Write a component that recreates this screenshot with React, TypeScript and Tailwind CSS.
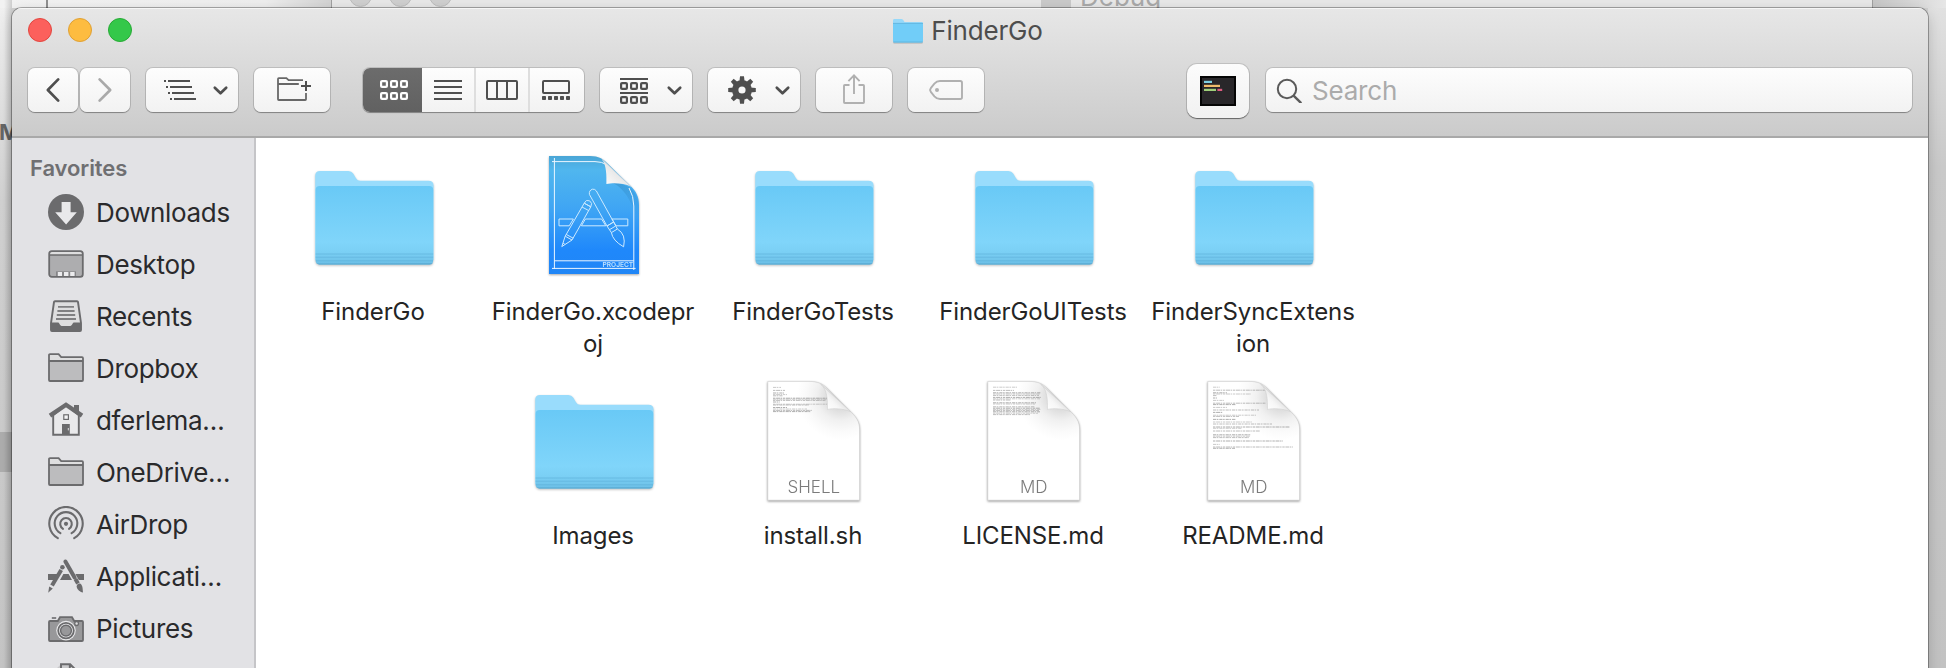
import type { ReactNode } from "react";

const INK = "#4f4f4f";
const FAINT = "#b0b0b0";
const SIDE = "#6b6b6d";

/* ---------- toolbar ---------- */

function ToolButton({ x, w = 92, className = "w-[92px]", children }: { x: number; w?: number; className?: string; children: ReactNode }) {
  return (
    <button
      className={`h-[44px] shrink-0 rounded-[7px] bg-linear-to-b from-[#fdfdfd] to-[#f2f2f2] shadow-[0_0_0_1px_rgba(0,0,0,0.13),0_1px_1px_0_rgba(0,0,0,0.28)] ${className}`}
    >
      <svg viewBox={`${x} 68 ${w} 44`} className="block h-full w-full" fill="none">
        {children}
      </svg>
    </button>
  );
}

function Caret({ x }: { x: number }) {
  return (
    <polyline
      points={`${x + 68.8},87.8 ${x + 74.5},93.3 ${x + 80.2},87.8`}
      stroke={INK}
      strokeWidth="2.7"
      strokeLinecap="round"
      strokeLinejoin="round"
    />
  );
}

function Squares({ x, y, color }: { x: number; y: number; color: string }) {
  return (
    <g stroke={color} strokeWidth="2.2">
      {[0, 10, 20].map((d) => (
        <rect key={d} x={x + d + 1.1} y={y + 1.1} width="5.8" height="5.8" rx="1" />
      ))}
    </g>
  );
}

function Segment({ x, w, className, children }: { x: number; w: number; className: string; children: ReactNode }) {
  return (
    <button className={`h-[44px] shrink-0 ${className}`}>
      <svg viewBox={`${x} 68 ${w} 44`} className="block h-full w-full" fill="none">
        {children}
      </svg>
    </button>
  );
}

function Toolbar() {
  return (
    <div className="flex h-[54px] items-center pr-4 pl-4">
      <div className="flex gap-[2px]">
        <ToolButton x={28} w={50} className="w-[50px]">
          <polyline points="58.2,79.4 47.8,90 58.2,100.6" stroke={INK} strokeWidth="2.7" strokeLinecap="round" strokeLinejoin="round" />
        </ToolButton>
        <ToolButton x={80} w={50} className="w-[50px]">
          <polyline points="99.6,79.4 110.2,90 99.6,100.6" stroke="#a9a9a9" strokeWidth="2.7" strokeLinecap="round" strokeLinejoin="round" />
        </ToolButton>
      </div>
      <div className="ml-4 flex gap-4">
        <ToolButton x={146}>
          <g fill={INK}>
            {[0, 1, 2, 3].map((i) => (
              <g key={i}>
                <rect x={164 + i * 2} y={80 + i * 6} width="2" height="2" />
                <rect x={168 + i * 2} y={80 + i * 6} width="22" height="2" />
              </g>
            ))}
          </g>
          <Caret x={146} />
        </ToolButton>
        <ToolButton x={254} w={76} className="w-[76px]">
          <path
            d="M306 93V99.2a.8.8 0 0 1-.8.8H278.8a.8.8 0 0 1-.8-.8V79a.8.8 0 0 1 .8-.8H286.4L288.6 80.2H303M278 84H298.8"
            stroke="#686868"
            strokeWidth="1.8"
          />
          <path d="M306 81V91M301 86H311" stroke={INK} strokeWidth="2" />
        </ToolButton>
      </div>
      <div className="ml-[33px] flex overflow-hidden rounded-[7px] bg-linear-to-b from-[#fdfdfd] to-[#f2f2f2] shadow-[0_0_0_1px_rgba(0,0,0,0.13),0_1px_1px_0_rgba(0,0,0,0.28)]">
        <Segment x={363} w={59} className="w-[59px] bg-linear-to-b from-[#6c6c6c] to-[#616161]">
          <Squares x={380} y={80} color="#ffffff" />
          <Squares x={380} y={92} color="#ffffff" />
        </Segment>
        <Segment x={422} w={52} className="w-[54px] border-r-2 border-[#dedede]">
          <path d="M434 81H462M434 87H462M434 93H462M434 99H462" stroke={INK} strokeWidth="2" />
        </Segment>
        <Segment x={476} w={52} className="w-[54px] border-r-2 border-[#dedede]">
          <rect x="487" y="81" width="30" height="18" rx="1" stroke={INK} strokeWidth="2" />
          <path d="M497 81V99M507 81V99" stroke={INK} strokeWidth="2" />
        </Segment>
        <Segment x={530} w={54} className="w-[54px]">
          <rect x="543" y="81" width="26" height="12" rx="1" stroke={INK} strokeWidth="2" />
          {[0, 1, 2, 3, 4].map((i) => (
            <rect key={i} x={542 + i * 6} y="96" width="4" height="4" rx=".8" fill={INK} />
          ))}
        </Segment>
      </div>
      <div className="ml-4 flex gap-4">
        <ToolButton x={600}>
          <path d="M620 79H648M620 93H648" stroke={INK} strokeWidth="2" />
          <Squares x={620} y={82} color={INK} />
          <Squares x={620} y={96} color={INK} />
          <Caret x={600} />
        </ToolButton>
        <ToolButton x={708}>
          <circle cx="742" cy="90" r="6.8" stroke={INK} strokeWidth="6.4" />
          <g fill={INK}>
            {[0, 45, 90, 135, 180, 225, 270, 315].map((a) => (
              <path key={a} d="M739.4 82L740 76.2H744L744.6 82Z" transform={`rotate(${a} 742 90)`} />
            ))}
          </g>
          <Caret x={708} />
        </ToolButton>
        <ToolButton x={816} w={76} className="w-[76px]">
          <path
            d="M849.5 85H844.8a.8.8 0 0 0-.8.8V102.2a.8.8 0 0 0 .8.8H863.2a.8.8 0 0 0 .8-.8V85.8a.8.8 0 0 0-.8-.8H858.5M854 75.4V94M848.4 81.2L854 75.4L859.6 81.2"
            stroke={FAINT}
            strokeWidth="1.9"
          />
        </ToolButton>
        <ToolButton x={908} w={76} className="w-[76px]">
          <path
            d="M940 81H960.2a1.8 1.8 0 0 1 1.8 1.8V97.2a1.8 1.8 0 0 1-1.8 1.8H940C937 99 935.8 98 934.4 96.4L930.8 91.8Q929.4 90 930.8 88.2L934.4 83.6C935.8 82 937 81 940 81Z"
            stroke={FAINT}
            strokeWidth="1.9"
          />
          <circle cx="937" cy="90" r="2" fill={FAINT} />
        </ToolButton>
      </div>
      <button className="mt-[2px] ml-auto h-[54px] w-[62px] shrink-0 rounded-[10px] bg-linear-to-b from-[#fcfcfc] to-[#f1f1f1] shadow-[0_0_0_1px_rgba(0,0,0,0.12),0_1px_1px_0_rgba(0,0,0,0.45)]">
        <svg viewBox="1187 64 62 54" className="block h-full w-full">
          <rect x="1200" y="76" width="36" height="30" fill="#050505" />
          <rect x="1202" y="78" width="32" height="26" fill="#29272a" />
          <rect x="1204" y="80.8" width="8" height="2.2" fill="#7fd0e2" />
          <rect x="1204" y="84.8" width="16" height="2.2" fill="#f0bd6c" />
          <rect x="1204" y="88.8" width="12" height="2.2" fill="#9fd07a" />
          <rect x="1217.4" y="88.8" width="4.8" height="2.2" fill="#dd5c80" />
        </svg>
      </button>
      <div className="ml-[17px] flex h-[44px] w-[646px] shrink-0 items-center rounded-[7px] bg-linear-to-b from-[#fdfdfd] to-[#f2f2f2] shadow-[0_0_0_1px_rgba(0,0,0,0.13),0_1px_1px_0_rgba(0,0,0,0.28)]">
        <svg viewBox="0 0 26 26" className="ml-[10px] block h-[26px] w-[26px]" fill="none" stroke="#5a5a5a" strokeWidth="2">
          <circle cx="11" cy="12" r="9.2" />
          <path d="M17.6 18.6L25.2 26.2" strokeWidth="2.4" />
        </svg>
        <span className="ml-[10px] pt-[2px] text-[26px] leading-[42px] tracking-[-0.2px] text-[#ababab]">Search</span>
      </div>
    </div>
  );
}

/* ---------- sidebar ---------- */

function SmallFolder() {
  return (
    <>
      <path d="M1 11V5.2a1 1 0 0 1 1-1H10.6L13.2 7.2H34a1 1 0 0 1 1 1V11Z" fill="#dededf" />
      <path d="M1 11H35V30a1 1 0 0 1-1 1H2a1 1 0 0 1-1-1Z" fill="#bcbcbe" />
      <path d="M1 5.2a1 1 0 0 1 1-1H10.6L13.2 7.2H34a1 1 0 0 1 1 1V30a1 1 0 0 1-1 1H2a1 1 0 0 1-1-1ZM1 11H35" fill="none" stroke={SIDE} strokeWidth="1.8" />
    </>
  );
}

const places: { name: string; icon: ReactNode }[] = [
  {
    name: "Downloads",
    icon: (
      <>
        <circle cx="18" cy="18" r="18" fill={SIDE} />
        <path d="M13.6 8H22.6V18.3H28.8L18.1 30.4L7.2 18.3H13.6Z" fill="#e9e9eb" />
      </>
    ),
  },
  {
    name: "Desktop",
    icon: (
      <>
        <rect x="1.2" y="5.2" width="33.6" height="25.6" rx="2.6" fill="#adadaf" />
        <path d="M1.2 9V7.8a2.6 2.6 0 0 1 2.6-2.6H32.2a2.6 2.6 0 0 1 2.6 2.6V9Z" fill="#dededf" />
        <rect x="8" y="25.4" width="20" height="5" fill="#858587" />
        <path d="M9.8 26H14V30H9.8ZM16 26H20.4V30H16ZM22.2 26H26.6V30H22.2Z" fill="#ececee" />
        <path d="M1.2 9H34.8" stroke={SIDE} strokeWidth="1.7" />
        <rect x="1.2" y="5.2" width="33.6" height="25.6" rx="2.6" fill="none" stroke={SIDE} strokeWidth="1.8" />
      </>
    ),
  },
  {
    name: "Recents",
    icon: (
      <>
        <path d="M7 3.2H29a1 1 0 0 1 1 .8L33 25V32a1 1 0 0 1-1 1H4a1 1 0 0 1-1-1V25L6 4a1 1 0 0 1 1-.8Z" fill="#dededf" stroke={SIDE} strokeWidth="1.9" />
        <path d="M3 24.4H10.2C11.6 24.4 11.4 28 14.6 28H21.4C24.6 28 24.4 24.4 25.8 24.4H33V32a1 1 0 0 1-1 1H4a1 1 0 0 1-1-1Z" fill={SIDE} />
        <path d="M10 8.8H26M9.4 13H26.6M8.8 17H27.2M8 21H28" stroke="#808082" strokeWidth="1.8" />
      </>
    ),
  },
  { name: "Dropbox", icon: <SmallFolder /> },
  {
    name: "dferlema…",
    icon: (
      <>
        <path d="M26 3H31V12H26Z" fill={SIDE} />
        <path d="M5.2 13V32.8H30.8V13L18 3Z" fill="#e9e9eb" stroke={SIDE} strokeWidth="1.9" />
        <path d="M2 13.6L18 2.8L34 13.6" fill="none" stroke={SIDE} strokeWidth="4.4" />
        <rect x="15.8" y="12.8" width="4.6" height="4.6" fill="#f4f4f6" stroke={SIDE} strokeWidth="1.2" />
        <path d="M14 22H21.8V33H14Z" fill={SIDE} />
        <path d="M20.3 26V28.4" stroke="#e9e9eb" strokeWidth=".9" />
      </>
    ),
  },
  { name: "OneDrive…", icon: <SmallFolder /> },
  {
    name: "AirDrop",
    icon: (
      <g fill="none" stroke={SIDE} strokeWidth="2.1" strokeLinecap="round">
        <circle cx="18" cy="17.8" r="2.1" fill={SIDE} stroke="none" />
        <path d="M15 22.8A5.8 5.8 0 1 1 21 22.8" />
        <path d="M12.4 27.2A11.3 11.3 0 1 1 23.6 27.2" />
        <path d="M9.8 32.2A16.7 16.7 0 1 1 26.2 32.2" />
      </g>
    ),
  },
  {
    name: "Applicati…",
    icon: (
      <>
        <path d="M0 16H9.6L6.2 22H0ZM15.4 16H20.6L24 22H12ZM27.4 16H36V22H30.8Z" fill={SIDE} />
        <path d="M17.4 3.6L26.6 19.6" stroke={SIDE} strokeWidth="4" strokeLinecap="round" />
        <path d="M27.4 21L30 25.4" stroke={SIDE} strokeWidth="4" />
        <path d="M28.6 28.4C29 25.6 32 24.4 33.6 27C35 29.2 34.6 32 35 34.6C32.4 33.8 29.2 32 28.6 28.4Z" fill={SIDE} />
        <circle cx="14.4" cy="9.2" r="2.3" fill={SIDE} />
        <path d="M13.2 12L4 27.6" stroke={SIDE} strokeWidth="4" />
        <path d="M1.2 28.4L4.8 30.4L.2 34.8Z" fill={SIDE} />
      </>
    ),
  },
  {
    name: "Pictures",
    icon: (
      <>
        <path d="M3.8 8H8.2" stroke={SIDE} strokeWidth="1.6" />
        <path
          d="M2 11H9.8L12 7.2H24L26.2 11H34a1 1 0 0 1 1 1V30a1 1 0 0 1-1 1H2a1 1 0 0 1-1-1V12a1 1 0 0 1 1-1Z"
          fill="#98989a"
          stroke={SIDE}
          strokeWidth="1.8"
        />
        <circle cx="18" cy="20.6" r="9.8" fill="#e9e9eb" />
        <circle cx="18" cy="20.6" r="7.8" fill="none" stroke={SIDE} strokeWidth="1.8" />
        <circle cx="18" cy="20.6" r="5.4" fill="#98989a" stroke={SIDE} strokeWidth="1.4" />
        <circle cx="28.6" cy="13.6" r="1.9" fill="#dededf" stroke={SIDE} strokeWidth="1.3" />
      </>
    ),
  },
  {
    name: "",
    icon: (
      <>
        <path d="M13 2.2H22L29.4 9V34H7V8Z" fill="#c9c9cb" />
        <path d="M13 10V2.2H22.2L29.4 9.6M21.8 2.4V9" fill="none" stroke={SIDE} strokeWidth="1.9" />
      </>
    ),
  },
];

function Sidebar() {
  return (
    <aside className="h-full w-[244px] shrink-0 border-r-2 border-[#c5c5c8] bg-[#e2e2e5]">
      <h2 className="h-[48px] pt-[8px] pl-[18px] text-[22px] leading-[44px] font-semibold tracking-[-0.1px] text-[#6f6f72]">Favorites</h2>
      <ul>
        {places.map((p, i) => (
          <li key={i} className="flex h-[52px] items-center pl-[36px]">
            <svg viewBox="0 0 36 36" className="block h-[36px] w-[36px] shrink-0">
              {p.icon}
            </svg>
            <span className="ml-[12px] pt-[2px] text-[26px] leading-[50px] tracking-[-0.35px] whitespace-nowrap text-[#2a2a2c]">{p.name}</span>
          </li>
        ))}
      </ul>
    </aside>
  );
}

/* ---------- file icons ---------- */

function FolderIcon() {
  return (
    <svg viewBox="0 0 128 128" className="block h-[128px] w-[128px] drop-shadow-[0_1px_1px_rgba(0,0,0,0.25)]">
      <defs>
        <linearGradient id="face" x1="0" y1="0" x2="0" y2="1">
          <stop offset="0" stopColor="#69c9f6" />
          <stop offset=".72" stopColor="#80d5fa" />
          <stop offset=".85" stopColor="#7acff4" />
          <stop offset="1" stopColor="#6cbfe6" />
        </linearGradient>
      </defs>
      <path d="M6.2 108V24Q6.2 19 11 19H39.4Q42.6 19 44.2 21.6L47 26.2Q48.4 28.8 51.4 28.8H119.6Q124.6 28.8 124.6 33.6V108Z" fill="#99dcfc" />
      <path d="M6.6 38Q6.6 34 10.6 34H120.2Q124.2 34 124.2 38V108.6Q124.2 112.4 120.4 112.4H10.4Q6.6 112.4 6.6 108.6Z" fill="url(#face)" />
      <path d="M6.6 102H124.2M6.6 105.2H124.2M6.8 108.8H124" stroke="#5fb1da" strokeWidth=".9" opacity=".75" />
      <path d="M7 111.6Q8 112.4 10.4 112.4H120.4Q123 112.4 123.8 111.2Z" fill="#58a9d2" />
    </svg>
  );
}

function ProjectIcon() {
  return (
    <svg viewBox="0 0 128 128" className="block h-[128px] w-[128px] drop-shadow-[0_1px_1px_rgba(0,0,0,0.35)]">
      <defs>
        <linearGradient id="blue" x1="0" y1="0" x2="0" y2="1">
          <stop offset="0" stopColor="#4aa6d6" />
          <stop offset=".12" stopColor="#50b6ee" />
          <stop offset=".45" stopColor="#3fa5f4" />
          <stop offset=".8" stopColor="#1f88fb" />
          <stop offset="1" stopColor="#2086f6" />
        </linearGradient>
        <linearGradient id="curl" x1="0" y1="1" x2="1" y2="0">
          <stop offset="0" stopColor="#ffffff" />
          <stop offset=".5" stopColor="#e8e8e8" />
          <stop offset="1" stopColor="#ffffff" />
        </linearGradient>
        <linearGradient id="shade" x1="0" y1="0" x2=".4" y2="1">
          <stop offset="0" stopColor="#2a7db5" stopOpacity=".4" />
          <stop offset="1" stopColor="#2a7db5" stopOpacity="0" />
        </linearGradient>
      </defs>
      <path d="M20 4H61C70 4 74 7 78 11L101.6 34C107 39 110 45 110 53V122H20Z" fill="url(#blue)" />
      <path d="M84 31C98 31 109 38 110 56V76C106 56 98 38 84 31Z" fill="url(#shade)" />
      <path d="M25.4 6V117M23 9.6H66Q74 10 76 12M104.8 118V54Q104.8 44 100 36M23 116.4H106.6M25.4 108.8H104.8" stroke="#eaf6ff" strokeWidth="1" fill="none" />
      <path d="M73 7.4C77.6 13 77.6 24 77.4 32C84 30.4 95 31 101.6 34.4Z" fill="url(#curl)" />
      <path d="M73 7.4L101.6 34.4" stroke="#d5d9dd" strokeWidth=".8" />
      <g fill="none" stroke="#cdeaff" strokeWidth="1">
        <path d="M30 67H44.4L40.2 73.8H30ZM56.4 67H72.6L76.8 73.8H52.4ZM83 67H98.8V73.8H87Z" />
        <path d="M60.4 42.4Q59.8 38.4 63.4 37.2Q66 36.8 67.4 39L84.6 70L78 74Z" />
        <path d="M78 74L84.6 70L88.4 77L82.4 80.6ZM82.4 80.6Q83.6 88.6 94.6 94.8Q97.4 82.4 88.4 77M80.6 77.6L86.4 74.2" />
        <path d="M55.2 51.2Q57 47 60.6 48.8Q64 51 61.8 54.8ZM55.2 51.2L61.8 54.8L43 88L36.2 84.2ZM53 55L59.8 58.6M37.2 82.4L44.2 86.2M36.2 84.2L32.8 94.6L43 88M34 91L35.8 92.2" />
      </g>
      <text x="104.2" y="115" textAnchor="end" fontSize="6.6" fontWeight="600" fill="#bfe2ff" fontFamily="Inter, sans-serif">
        PROJECT
      </text>
    </svg>
  );
}

type Line = [y: number, x2: number];

function DocumentIcon({ kind, lines }: { kind: string; lines: Line[] }) {
  return (
    <svg viewBox="0 0 128 128" className="block h-[128px] w-[128px] drop-shadow-[0_1px_1px_rgba(0,0,0,0.4)]">
      <defs>
        <radialGradient id="paper" gradientUnits="userSpaceOnUse" cx="92" cy="20" r="44">
          <stop offset="0" stopColor="#c6c6c6" />
          <stop offset=".3" stopColor="#dcdcdc" />
          <stop offset=".55" stopColor="#f0f0f0" />
          <stop offset=".8" stopColor="#fafafa" />
          <stop offset="1" stopColor="#ffffff" />
        </radialGradient>
        <linearGradient id="flap" gradientUnits="userSpaceOnUse" x1="78" y1="34" x2="91" y2="21">
          <stop offset="0" stopColor="#ffffff" />
          <stop offset=".55" stopColor="#f6f6f6" />
          <stop offset="1" stopColor="#dddddd" />
        </linearGradient>
      </defs>
      <path d="M18.8 5.4H60C69 5.4 73.4 7.8 78 12L99.6 33.6C107 40.6 110.6 45 110.6 54V124.2H18.8Z" fill="url(#paper)" stroke="#cccccc" strokeWidth=".6" />
      <g stroke="#8a8a8a" strokeWidth=".9">
        {lines.map(([y, x2], i) => (
          <path key={i} d={`M24 ${y}H${x2}`} strokeDasharray={i % 2 ? "2.4 .7 4 .6 1.4 .8" : "3.2 .6 1.6 .9"} opacity={0.5 + (i % 3) * 0.13} />
        ))}
      </g>
      <path d="M71.6 8C78.4 13.6 78.6 24 78.4 33.4C85 32 94 32.6 101.6 35.6Z" fill="url(#flap)" stroke="#cfcfcf" strokeWidth=".6" />
      <text x="64.8" y="116.8" textAnchor="middle" fontSize="17" fontWeight="300" fill="#7b7b7b" fontFamily="Inter, sans-serif">
        {kind}
      </text>
    </svg>
  );
}

const shellLines: Line[] = [
  [11.4, 32], [14.4, 36], [17, 35], [18.6, 38], [19.8, 34], [22.2, 78], [23.2, 78], [24.4, 77], [26, 31], [28.2, 78], [29, 60], [31.5, 38], [33, 58], [34.4, 63], [35.6, 62],
];
const licenseLines: Line[] = [
  [11.2, 48], [14.4, 45], [16.8, 72], [18, 71], [19.4, 70], [21.4, 72], [22.8, 71], [24, 42], [26.8, 67], [28, 66], [30.8, 66], [32.2, 71], [33.4, 72], [34.6, 70], [35.8, 71], [37.2, 69], [38.6, 61],
];
const readmeLines: Line[] = [
  [11.2, 31], [14.2, 77], [16.8, 38], [18, 62], [19.6, 28], [22, 28], [24.4, 35], [27.2, 77], [28.6, 47], [31.4, 38], [34, 70], [36.4, 34], [39.2, 67], [40.4, 50], [43.4, 47], [46, 63], [48, 83], [51, 101],
  [52.3, 53], [55, 71], [58.8, 62], [60.2, 61], [61.6, 60], [65, 94], [68.4, 31], [71, 104], [72.3, 46],
];

const files: { name: string; icon: ReactNode; start?: boolean }[] = [
  { name: "FinderGo", icon: <FolderIcon /> },
  { name: "FinderGo.xcodepr\noj", icon: <ProjectIcon /> },
  { name: "FinderGoTests", icon: <FolderIcon /> },
  { name: "FinderGoUITests", icon: <FolderIcon /> },
  { name: "FinderSyncExtens\nion", icon: <FolderIcon /> },
  { name: "Images", icon: <FolderIcon />, start: true },
  { name: "install.sh", icon: <DocumentIcon kind="SHELL" lines={shellLines} /> },
  { name: "LICENSE.md", icon: <DocumentIcon kind="MD" lines={licenseLines} /> },
  { name: "README.md", icon: <DocumentIcon kind="MD" lines={readmeLines} /> },
];

/* ---------- windows ---------- */

function BackdropWindows() {
  return (
    <div className="absolute inset-0 bg-[#d0d0d0]">
      <div className="absolute top-0 left-0 h-full w-[12px] bg-linear-to-b from-[#f1f1f1] via-[#d2d2d2] via-30% to-[#c6c6c6]" />
      <div className="absolute top-0 left-0 h-[8px] w-[332px] bg-linear-to-r from-[#f2f2f2] via-[#eeeeee] via-80% to-[#d2d2d2]" />
      <div className="absolute top-0 left-[46px] h-[8px] w-[2px] bg-[#8f8f8f]" />
      <div className="absolute top-0 left-[331px] h-[8px] w-[1542px] overflow-hidden border-r border-l border-[#a0a0a0] bg-[#e8e8e8]">
        <div className="absolute top-[-16px] left-[17px] h-[23px] w-[23px] rounded-full border border-[#bdbdbd] bg-[#cfcfcf]" />
        <div className="absolute top-[-16px] left-[57px] h-[23px] w-[23px] rounded-full border border-[#bdbdbd] bg-[#cfcfcf]" />
        <div className="absolute top-[-16px] left-[97px] h-[23px] w-[23px] rounded-full border border-[#bdbdbd] bg-[#cfcfcf]" />
        <div className="absolute top-0 left-[709px] h-[8px] w-[30px] bg-[#cacaca]" />
        <span className="absolute top-[-19px] left-[748px] text-[26px] leading-[32px] text-[#a9a9a9]">Debug</span>
      </div>
      <div className="absolute top-0 right-0 h-full w-[18px] bg-linear-to-b from-[#e2e2e2] via-[#c9c9c9] via-25% to-[#c2c2c2]" />
      <div className="absolute top-0 right-0 h-[8px] w-[73px] bg-linear-to-r from-[#c6c6c6] to-[#e6e6e6]" />
      <span className="absolute top-[117px] left-[-1px] text-[22px] leading-[30px] font-bold text-[#666666]">M</span>
      <div className="absolute top-[432px] left-0 h-[40px] w-[12px] bg-[#aeaeae]" />
      <div className="absolute top-0 left-[4px] h-full w-[8px] bg-linear-to-r from-transparent to-black/15" />
    </div>
  );
}

export default function App() {
  return (
    <div className="relative h-[668px] w-[1946px] overflow-hidden font-[Inter,sans-serif]">
      <BackdropWindows />
      <main className="absolute top-[8px] left-[12px] flex h-[680px] w-[1916px] flex-col overflow-hidden rounded-t-[10px] bg-white shadow-[0_0_0_1px_rgba(0,0,0,0.3),0_4px_14px_rgba(0,0,0,0.2)]">
        <header className="h-[130px] shrink-0 border-b-2 border-[#a9a9a9] bg-linear-to-b from-[#e7e7e7] to-[#cbcbcb] shadow-[inset_0_1px_0_#f6f6f6]">
          <div className="relative flex h-[45px] items-center justify-center pr-[4px]">
            <div className="absolute top-[10px] left-[16px] flex gap-4">
              <span className="h-[24px] w-[24px] rounded-full border border-[#e2463f] bg-[#fc605c]" />
              <span className="h-[24px] w-[24px] rounded-full border border-[#dfa034] bg-[#fdbc40]" />
              <span className="h-[24px] w-[24px] rounded-full border border-[#27aa35] bg-[#34c84a]" />
            </div>
            <svg viewBox="0 0 30 26" className="block h-[26px] w-[30px] drop-shadow-[0_1px_0_rgba(0,0,0,0.15)]">
              <path d="M0 22V2.4Q0 1 1.4 1H8.4Q9.4 1 10 1.8L11.6 4H28.6Q30 4 30 5.4V22Z" fill="#96d9fa" />
              <path d="M0 5.6H30V23Q30 24.4 28.6 24.4H1.4Q0 24.4 0 23Z" fill="#71cdf8" />
              <path d="M0 5.4H30M.4 24H29.6" stroke="#5db4de" strokeWidth=".9" />
            </svg>
            <h1 className="ml-[8px] pt-px text-[26px] leading-[44px] font-normal tracking-[-0.2px] text-[#4d4d4d]">FinderGo</h1>
          </div>
          <div className="pt-[10px]">
            <Toolbar />
          </div>
        </header>
        <div className="flex min-h-0 flex-1">
          <Sidebar />
          <section className="grid auto-rows-[224px] grid-cols-[repeat(5,220px)] content-start pt-[14px] pl-[7px]">
            {files.map((f) => (
              <figure key={f.name} className={`flex flex-col items-center ${f.start ? "col-start-2" : ""}`}>
                {f.icon}
                <figcaption className="mt-[16px] text-center text-[24px] leading-[32px] tracking-[-0.1px] whitespace-pre text-[#242424]">{f.name}</figcaption>
              </figure>
            ))}
          </section>
        </div>
      </main>
    </div>
  );
}
